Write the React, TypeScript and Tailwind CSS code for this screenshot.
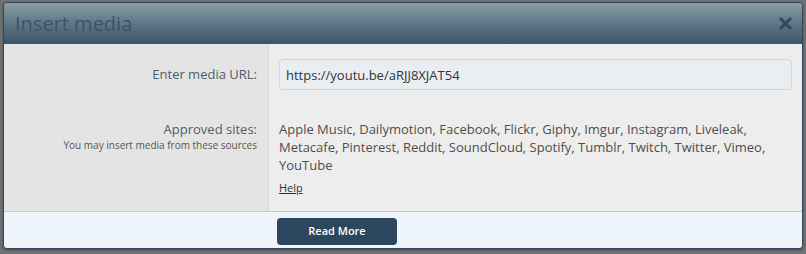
import React, { useState } from 'react';

const SITES =
  'Apple Music, Dailymotion, Facebook, Flickr, Giphy, Imgur, Instagram, Liveleak, Metacafe, Pinterest, Reddit, SoundCloud, Spotify, Tumblr, Twitch, Twitter, Vimeo, YouTube';

export default function App() {
  const [url, setUrl] = useState('https://youtu.be/aRJJ8XJAT54');

  return (
    <div
      className="w-[806px] h-[254px] bg-[#6f7072] pt-[2px] pb-[5px] px-[3px]"
      style={{ fontFamily: '"Open Sans", "Liberation Sans", sans-serif' }}
    >
      <div className="flex flex-col h-full rounded-[4px] overflow-hidden border border-[#34475a] shadow-[0_1px_2px_rgba(0,0,0,0.4)]">
        {/* Header */}
        <div className="h-[41px] shrink-0 flex items-center justify-between pl-[11px] pr-[9px] bg-gradient-to-b from-[#8b9ca6] via-[#5f7686] to-[#3a5467]">
          <h2 className="text-[20px] leading-none text-[#3b5467]">Insert media</h2>
          <button className="w-[16px] h-[16px] flex items-center justify-center text-[#33495b]">
            <svg width="15" height="15" viewBox="0 0 15 15">
              <path d="M2 2L13 13M13 2L2 13" stroke="currentColor" strokeWidth="3" strokeLinecap="butt" />
            </svg>
          </button>
        </div>

        {/* Body */}
        <div className="flex flex-1 text-[13px]">
          <div className="w-[264px] shrink-0 bg-[#e4e4e4] pr-[11px] text-right text-[#4f5d69]">
            <div className="h-[31px] mt-[15px] flex items-center justify-end">Enter media URL:</div>
            <div className="mt-[30px] leading-[18px]">Approved sites:</div>
            <div className="text-[10px] leading-[14px] text-[#555]">You may insert media from these sources</div>
          </div>
          <div className="flex-1 bg-[#ededed] border-l border-[#d9d9d9] pl-[10px] pr-[10px] pt-[15px] pb-[14px]">
            <input
              value={url}
              onChange={(e) => setUrl(e.target.value)}
              className="w-full h-[31px] rounded-[4px] border border-[#d2d6da] bg-[#e9eef2] px-[6px] text-[13px] text-[#333] outline-none"
            />
            <p className="mt-[30px] leading-[18px] text-[#4d4d4d]">{SITES}</p>
            <a href="#" className="block mt-[7px] text-[11px] leading-[14px] text-[#333] underline">
              Help
            </a>
          </div>
        </div>

        {/* Footer */}
        <div className="h-[37px] shrink-0 bg-[#edf4fb] border-t border-[#c5cacf] pl-[273px] pt-[5px]">
          <button className="w-[120px] h-[27px] rounded-[4px] bg-[#2c465d] text-white text-[11px] font-semibold">
            Read More
          </button>
        </div>
      </div>
    </div>
  );
}
